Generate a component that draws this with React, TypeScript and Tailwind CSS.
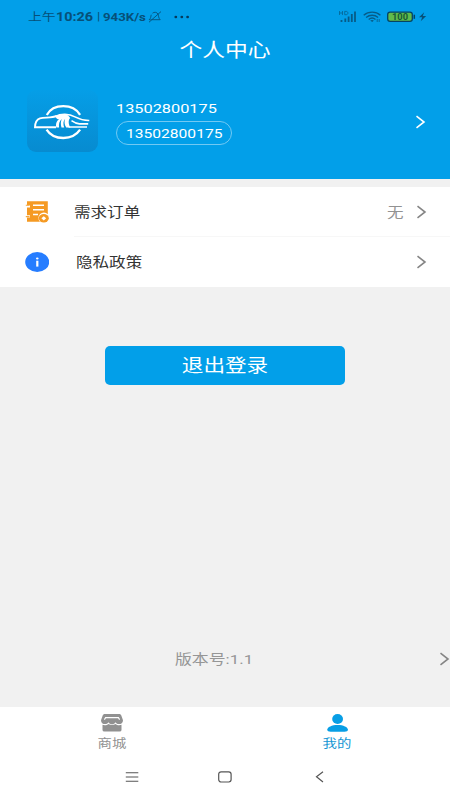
import React from "react";

type LabelProps = { children: React.ReactNode; className?: string };

// Wide-set text: glyphs are stretched horizontally.
function Label({ children, className = "origin-left scale-x-[1.2]" }: LabelProps) {
  return <span className={`inline-block whitespace-nowrap ${className}`}>{children}</span>;
}

function Chevron({ className = "" }: { className?: string }) {
  return (
    <svg className={`h-[14px] w-[11px] shrink-0 ${className}`} viewBox="0 0 11 14" fill="none" stroke="currentColor" strokeWidth="1.6">
      <path d="M1.5 1.2 9 7 1.5 12.8" />
    </svg>
  );
}

function StatusBar() {
  return (
    <div className="flex h-[34px] items-center pl-[28px] text-[#075078]">
      <div className="w-[28px] text-[11.5px] leading-[16px]"><Label>上午</Label></div>
      <div className="w-[41px] text-[12px] leading-[16px] font-bold"><Label>10:26</Label></div>
      <div className="w-[6px] text-[11px] leading-[16px]"><Label>|</Label></div>
      <div className="w-[45px] text-[11.6px] leading-[16px] font-bold"><Label className="origin-left scale-x-[1.14]">943K/s</Label></div>
      <svg className="h-[12px] w-[14px]" viewBox="0 0 14 12" fill="none" stroke="currentColor" strokeWidth="0.9">
        <path d="M4.5 2.2C6 .8 8.9 1 10 3c.8 1.5.2 4 2.2 5.7H3.2M3.2 3.7C2.8 5.4 3 7.3 1.2 8.7h1.5M13 .6 1 11.2" />
      </svg>
      <svg className="ml-[12px] h-[4px] w-[16px]" viewBox="0 0 16 4" fill="#06395b">
        <ellipse cx="1.8" cy="2" rx="1.4" ry="1.2" /><ellipse cx="7.8" cy="2" rx="1.4" ry="1.2" /><ellipse cx="13.6" cy="2" rx="1.4" ry="1.2" />
      </svg>
      <svg className="ml-[148px] h-[14px] w-[92px]" viewBox="338 10 92 14" fill="none" stroke="#075b87">
        <path d="M339.5 11v4M342.5 11v4M339.5 13h3M344.7 11.4h1.5c2.3 0 2.3 3.3 0 3.3h-1.5z" strokeWidth=".7" />
        <path d="M341.5 20v2M345.3 18.5v3.5M348.6 16.5v5.5M351.8 14v8M355 11.5v10.5" strokeWidth="1.8" />
        <path d="M363.7 15.2c4.8-4.2 12.1-4.2 16.7 0M366.1 17.5c3.6-3 8.6-3 12 0M368.7 19.5c2.1-1.8 4.8-1.8 6.8 0" strokeWidth="1.3" />
        <path d="m370.2 20.5 2 1.5 1.7-1.5c-1-.8-2.6-.8-3.7 0Z" fill="#075b87" stroke="none" />
        <path d="M377.2 19v3M379.2 19v3" strokeWidth=".8" />
        <rect x="387.7" y="12.2" width="24.6" height="9.2" rx="2.4" fill="#61bb4b" stroke="#054463" strokeWidth="1.3" />
        <path d="M414.3 14.7v4.1" stroke="#054463" strokeWidth="1.5" />
        <text x="400" y="19.8" fontSize="8.3" fontFamily="Roboto" fontWeight="700" textAnchor="middle" textLength="16" lengthAdjust="spacingAndGlyphs" fill="#155a35" stroke="none">100</text>
        <path d="m424.2 12.2-5.2 5h3.2l-1.5 4 5.5-5.2h-3.4Z" fill="#075078" stroke="none" />
      </svg>
    </div>
  );
}

function Avatar() {
  return (
    <div className="h-[62px] w-[71px] shrink-0 rounded-[9px] bg-linear-to-b from-[#059ee7] to-[#078bd0]">
      <svg className="h-full w-full" viewBox="0 0 71 62" fill="none" stroke="white">
        <path d="M19.8 25C23 19.2 29.2 16.2 36.3 16.2c7.2 0 13.3 3 16.8 8.6M19.6 39.6C23 45 29.3 48 36.3 48s13.2-3 16.8-8.3" strokeWidth="2.3" />
        <path d="M29 37.2H8c.1-4.2 1.5-7.6 5-8.8 5-1.2 11.5-.3 16.8-2.6" strokeWidth="1.9" />
        <path d="M28 26.6c6-3.2 14-3 20 .3 4.3 2.3 8 3.7 14.3 3.6M41.5 37H60M51.5 33.9h9.7M44.5 30.7c2.5 1.8 4.7 3 8 3.2" strokeWidth="1.6" />
        <path d="M28.5 26.2c3.8-2 9.8-2.3 12.7-.6l2 2.4c-2.1 2-1.9 5.8.2 9.6h-4.2c-1.9-3.4-2.1-6-1-8.8-2.3 2.3-2.1 5.6-1 8.8h-2.7c-.9-3-.9-5.7.3-8.5-2.5 2.1-3.3 5-2.7 8.5h-2.8c-.8-3.2-.2-6 2.7-8.6-1.2.4-2.5.3-3.5-2.8Z" fill="white" stroke="none" />
      </svg>
    </div>
  );
}

function OrderIcon() {
  return (
    <svg className="h-[24px] w-[24px] shrink-0" viewBox="0 0 24 24">
      <path d="M2 1.2h20.8v13A5.3 5.3 0 0 0 15 21.8H2v-4.3h3v-2.2H2V7.5h3V5.3H2Z" fill="#f59a23" />
      <path d="M.8 5.2h3.7M.8 16.6h3.7" fill="none" stroke="#f5a83e" strokeWidth="1.1" />
      <path d="M8 5.2h11M8 9.8h11M8 14.5h5" stroke="white" strokeWidth="1.5" />
      <ellipse cx="18.8" cy="18.3" rx="5" ry="4.2" fill="#f59a23" />
      <path d="m18.8 16.2 2.4 2.1-2.4 2.1-2.4-2.1Z" fill="white" />
    </svg>
  );
}

function InfoIcon() {
  return (
    <svg className="h-[20px] w-[24px] shrink-0" viewBox="0 0 24 20">
      <ellipse cx="12.2" cy="10" rx="12" ry="10" fill="#267dff" />
      <path d="M11.2 8.7h2.2v5.9h-2.2z" fill="white" /><ellipse cx="12.3" cy="6.6" rx="1.3" ry="1" fill="white" />
    </svg>
  );
}

function BottomBar() {
  return (
    <footer className="h-[93px] bg-white">
      <nav className="grid h-[47px] grid-cols-2 text-[12px] leading-[17px]">
        <div className="flex flex-col items-center pt-[7px] text-[#919191]">
          <svg className="mr-px h-[18px] w-[22px]" viewBox="0 0 22 18" fill="currentColor">
            <path d="M4 0h14c1.3 0 1.9.5 2.3 1.5L22 6.2C22 11 16 11 14.5 8.2 13 11 9 11 7.5 8.2 6 11 0 11 0 6.2l1.7-4.7C2.1.5 2.7 0 4 0Z" />
            <path d="M1.5 10.8c2.3.8 4.6.3 6-.9 2.1 1.5 4.8 1.5 7 0 1.5 1.3 3.7 1.7 6 .9V16q0 1.5-2 1.5h-15q-2 0-2-1.5Z" />
            <path d="M3.4 5.6 4.6 3.6h12.8l1.2 2" fill="none" stroke="white" strokeWidth="1.1" />
          </svg>
          <Label className="mt-[4px] origin-center scale-x-[1.2]">商城</Label>
        </div>
        <div className="flex flex-col items-center pt-[7px] text-[#1496d4]">
          <svg className="h-[18px] w-[22px]" viewBox="0 0 22 18" fill="#079ee5">
            <ellipse cx="10.6" cy="5" rx="5.4" ry="5" /><path d="M.2 15.8c0-2.8 4.7-4.9 10.4-4.9S21 13 21 15.8c0 1.3-1.5 1.9-3.5 1.9H3.7c-2 0-3.5-.6-3.5-1.9Z" />
          </svg>
          <Label className="mt-[4px] origin-center scale-x-[1.2]">我的</Label>
        </div>
      </nav>
      <div className="flex h-[46px] items-center pl-[125px] text-[#555]">
        <svg className="h-[10px] w-[14px]" viewBox="0 0 14 10" fill="none" stroke="currentColor" strokeWidth="1.1"><path d="M.8 .8h12.5M.8 5h12.5M.8 9.2h12.5" /></svg>
        <svg className="ml-[79px] h-[12px] w-[14px]" viewBox="0 0 14 12" fill="none" stroke="currentColor" strokeWidth="1.2"><rect x=".7" y=".8" width="12.4" height="10.2" rx="2.4" /></svg>
        <svg className="ml-[83px] h-[12px] w-[9px]" viewBox="0 0 9 12" fill="none" stroke="currentColor" strokeWidth="1.2"><path d="M8 .8 1.5 5.8 8 11" /></svg>
      </div>
    </footer>
  );
}

export default function App() {
  return (
    <div className="flex h-[800px] w-[450px] flex-col overflow-hidden bg-[#f1f1f1] font-[Roboto,'Noto_Sans_CJK_SC',sans-serif]">
      <header className="h-[179px] shrink-0 bg-[#029fe9] text-white">
        <StatusBar />
        <h1 className="flex h-[32px] items-center justify-center pt-[2px] text-[19px] leading-[28px]">
          <Label className="origin-center scale-x-[1.2]">个人中心</Label>
        </h1>
        <div className="mt-[24px] flex pl-[27px]">
          <Avatar />
          <div className="ml-[18px] w-[116px] pt-[8px]">
            <div className="h-[20px] text-[13.6px] leading-[20px]"><Label>13502800175</Label></div>
            <div className="mt-[3px] h-[24px] rounded-full border border-[#72c9f3] pl-[9px] text-[13px] leading-[23px]">
              <Label>13502800175</Label>
            </div>
          </div>
          <Chevron className="mt-[25px] ml-[183px]" />
        </div>
      </header>
      <section className="mt-[8px] h-[100px] shrink-0 bg-white text-[13.8px] text-[#333]">
        <div className="flex h-[50px] items-center pl-[25px]">
          <OrderIcon />
          <div className="ml-[25px] flex h-full flex-1 items-center border-b border-[#f7f7f7]">
            <div className="w-[313px] pt-px leading-[20px]"><Label>需求订单</Label></div>
            <div className="w-[29px] pt-px leading-[20px] text-[#929292]"><Label>无</Label></div>
            <Chevron className="text-[#858585]" />
          </div>
        </div>
        <div className="flex h-[50px] items-center pl-[25px]">
          <InfoIcon />
          <div className="ml-[27px] w-[340px] leading-[20px]"><Label>隐私政策</Label></div>
          <Chevron className="text-[#858585]" />
        </div>
      </section>
      <main className="flex flex-1 flex-col">
        <button className="mt-[59px] ml-[105px] h-[39px] w-[240px] rounded-[5px] bg-[#029fe9] text-[18px] leading-[27px] text-white">
          <Label className="origin-center scale-x-[1.2]">退出登录</Label>
        </button>
        <div className="mt-auto mb-[37px] flex h-[22px] items-center pl-[175px] text-[13.5px] leading-[20px] text-[#969696]">
          <div className="w-[266px]"><Label className="origin-left scale-x-[1.25]">版本号:1.1</Label></div>
          <Chevron className="text-[#858585]" />
        </div>
      </main>
      <BottomBar />
    </div>
  );
}
